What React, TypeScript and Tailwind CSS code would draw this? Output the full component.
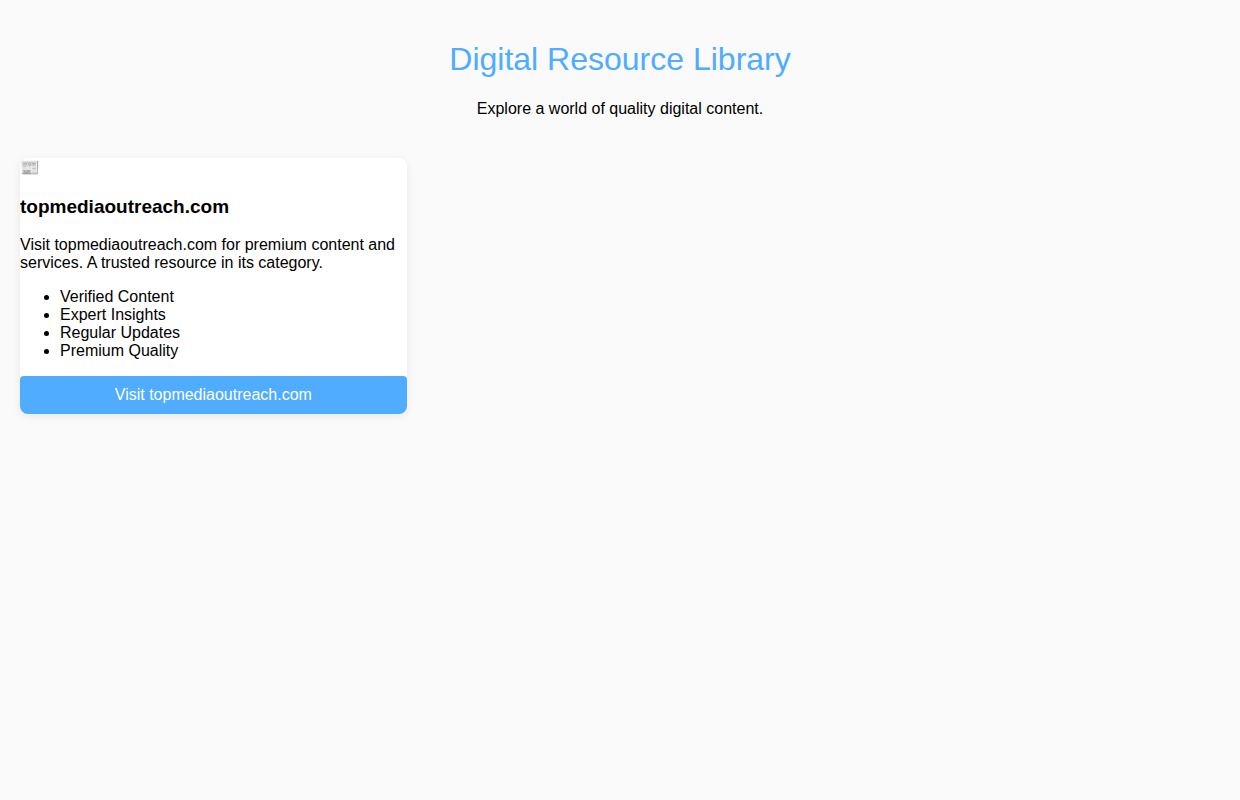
import React from 'react';

interface Resource {
  domain: string;
  icon: string;
  description: string;
  features: string[];
}

const RESOURCES: Resource[] = [
  {
    domain: 'topmediaoutreach.com',
    icon: '📰',
    description: 'Visit topmediaoutreach.com for premium content and services. A trusted resource in its category.',
    features: ['Verified Content', 'Expert Insights', 'Regular Updates', 'Premium Quality'],
  },
];

const ResourceCard: React.FC<{ resource: Resource }> = ({ resource }) => (
  <article className="overflow-hidden rounded-lg bg-white shadow-[0_2px_8px_rgba(0,0,0,0.08)]">
    <div className="h-[19px] leading-[19px]">{resource.icon}</div>
    <h3 className="mt-[19px] text-[19px] leading-[21px] font-bold">{resource.domain}</h3>
    <p className="mt-[19px] leading-[18px]">{resource.description}</p>
    <ul className="my-4 list-disc pl-10 leading-[18px]">
      {resource.features.map(feature => (
        <li key={feature}>{feature}</li>
      ))}
    </ul>
    <a
      href={`https://${resource.domain}`}
      className="block rounded bg-[#4facfe] py-[10px] text-center leading-[18px] text-white"
    >
      Visit {resource.domain}
    </a>
  </article>
);

const App: React.FC = () => {
  return (
    <div className="min-h-screen bg-[#fafafa] p-5 font-['Liberation_Sans',Arial,sans-serif] text-base text-black">
      <header className="px-5 pt-5 pb-10 text-center">
        <h1 className="text-[32px] leading-[38px] text-[#4facfe]">Digital Resource Library</h1>
        <p className="mt-[22px] leading-[18px]">Explore a world of quality digital content.</p>
      </header>

      <main className="grid grid-cols-1 gap-5 sm:grid-cols-2 lg:grid-cols-3">
        {RESOURCES.map(resource => (
          <ResourceCard key={resource.domain} resource={resource} />
        ))}
      </main>
    </div>
  );
};

export default App;
